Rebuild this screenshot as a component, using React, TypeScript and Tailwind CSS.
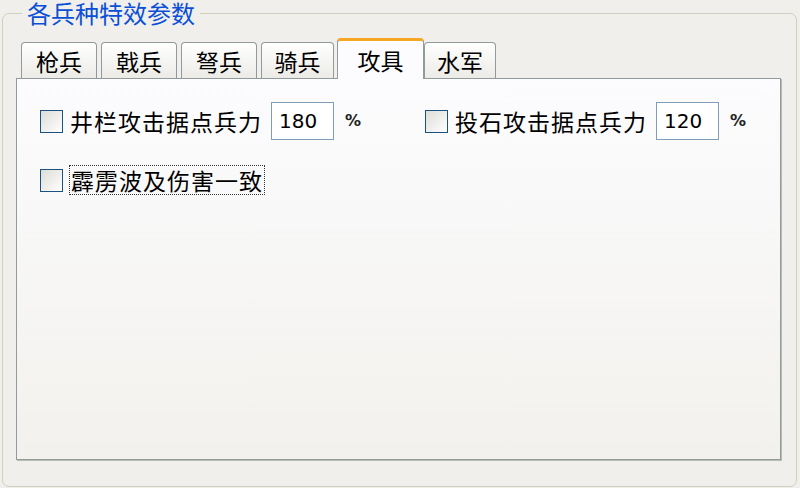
import React from 'react';

const cjk = '"Noto Sans CJK SC", "Noto Sans", sans-serif';

const tabs = [
  { label: '枪兵', w: 'w-[76px]', gap: 'ml-[5px]' },
  { label: '戟兵', w: 'w-[76px]', gap: 'ml-[4px]' },
  { label: '弩兵', w: 'w-[76px]', gap: 'ml-[4px]' },
  { label: '骑兵', w: 'w-[73px]', gap: 'ml-[4px]' },
  { label: '攻具', w: 'w-[87px]', gap: 'ml-[3px]', active: true },
  { label: '水军', w: 'w-[72px]', gap: 'ml-0' },
];

const Checkbox: React.FC = () => (
  <span className="block w-[23px] h-[23px] shrink-0 border border-[#1c5180] bg-gradient-to-br from-[#dcdcd7] to-white" />
);

const PercentField: React.FC<{ label: string; value: string }> = ({ label, value }) => (
  <div className="flex items-center">
    <Checkbox />
    <span className="ml-[7px] text-[23px] leading-none tracking-[1px] text-black">{label}</span>
    <div className="ml-[9px] w-[63px] h-[38px] border border-[#7f9db9] bg-white flex items-center pl-[7px] text-[20px] text-black" style={{ fontFamily: '"DejaVu Sans", sans-serif' }}>
      {value}
    </div>
    <span className="ml-[11px] text-[16px] font-bold text-[#222]" style={{ fontFamily: '"DejaVu Sans", sans-serif' }}>%</span>
  </div>
);

export default function App() {
  return (
    <div className="w-[800px] h-[488px] bg-[#f0efeb] overflow-hidden" style={{ fontFamily: cjk }}>
      <fieldset className="ml-[2px] w-[795px] h-[487px] border border-[#d0d0bf] rounded-[7px] pl-[13px] pr-[15px] pt-[12px] pb-[26px] flex flex-col">
        <legend className="ml-[6px] px-[5px] text-[24px] leading-[26px] text-[#0b4fd6]">各兵种特效参数</legend>
        <div className="flex items-end h-[40px] relative z-10">
          {tabs.map((t) =>
            t.active ? (
              <div
                key={t.label}
                className={`${t.gap} ${t.w} h-[41px] -mb-[1px] rounded-t-[4px] border-x border-[#919b9c] border-t-[3px] border-t-[#f5a623] bg-[#fcfcfe] flex items-center justify-center text-[23px] text-black`}
              >
                {t.label}
              </div>
            ) : (
              <div
                key={t.label}
                className={`${t.gap} ${t.w} h-[36px] rounded-t-[4px] border border-b-0 border-[#919b9c] bg-gradient-to-b from-white to-[#ecebe6] flex items-center justify-center text-[23px] text-black pt-[2px]`}
              >
                {t.label}
              </div>
            )
          )}
        </div>
        <div className="flex-1 border border-[#919b9c] shadow-[1px_1px_0_#b9bbb5] bg-gradient-to-b from-[#fcfcfe] to-[#f2f1ed] pl-[23px] pt-[23px]">
          <div className="grid grid-cols-[385px_1fr]">
            <PercentField label="井栏攻击据点兵力" value="180" />
            <PercentField label="投石攻击据点兵力" value="120" />
          </div>
          <div className="flex items-center mt-[25px]">
            <Checkbox />
            <span className="ml-[6px] text-[23px] leading-[28px] tracking-[1px] text-black border border-dotted border-[#333] px-[1px]">霹雳波及伤害一致</span>
          </div>
        </div>
      </fieldset>
    </div>
  );
}
